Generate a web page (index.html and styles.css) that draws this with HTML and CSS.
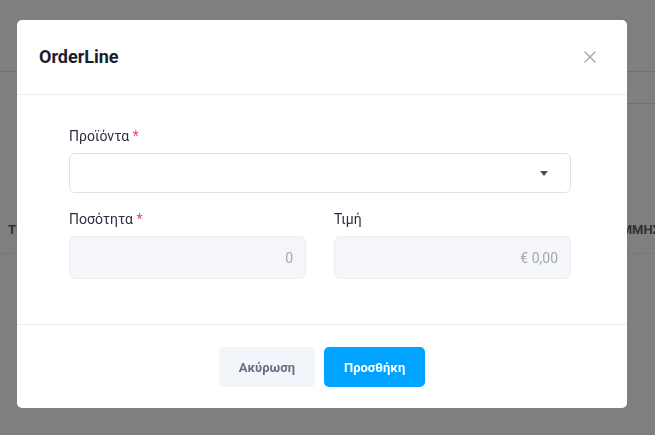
FILE: index.html
```html
<!DOCTYPE html>
<html lang="el">
<head>
<meta charset="utf-8">
<title>OrderLine</title>
<link rel="stylesheet" href="styles.css">
</head>
<body>
<div class="page">
  <div class="topbar"></div>
  <div class="subbar"></div>
  <div class="table-head">
    <span class="th-left">ΤΙΜΗ</span>
    <span class="th-right">ΓΡΑΜΜΗΣ</span>
  </div>
</div>
<div class="overlay"></div>
<div class="modal">
  <div class="modal-header">
    <h2 class="modal-title">OrderLine</h2>
    <button class="close-btn" aria-label="close">
      <svg width="12" height="12" viewBox="0 0 12 12"><path d="M1 1 L11 11 M11 1 L1 11" stroke="#a7aabd" stroke-width="1.5" fill="none" stroke-linecap="round"/></svg>
    </button>
  </div>
  <div class="modal-body">
    <div class="field">
      <label class="label">Προϊόντα <span class="req">*</span></label>
      <div class="select">
        <svg class="caret" width="8" height="5" viewBox="0 0 8 5"><path d="M0 0 H8 L4 5 Z" fill="#4f5160"/></svg>
      </div>
    </div>
    <div class="row">
      <div class="field">
        <label class="label">Ποσότητα <span class="req">*</span></label>
        <div class="input">0</div>
      </div>
      <div class="field">
        <label class="label">Τιμή</label>
        <div class="input">€ 0,00</div>
      </div>
    </div>
  </div>
  <div class="modal-footer">
    <button class="btn btn-cancel">Ακύρωση</button>
    <button class="btn btn-primary">Προσθήκη</button>
  </div>
</div>
</body>
</html>
```
FILE: styles.css
```css
html, body {
  margin: 0;
  padding: 0;
  width: 655px;
  height: 435px;
  overflow: hidden;
  font-family: Roboto, "Noto Sans", sans-serif;
  background: #ffffff;
}
.page {
  width: 655px;
  height: 435px;
}
.topbar {
  height: 72px;
  border-bottom: 1px solid #dedede;
  box-sizing: border-box;
}
.subbar {
  height: 32px;
  margin-left: 560px;
  border-bottom: 1px solid #dedede;
  box-sizing: border-box;
}
.table-head {
  margin-top: 102px;
  height: 48px;
  display: flex;
  justify-content: space-between;
  align-items: center;
  border-bottom: 1px dashed #e6e6e6;
  padding: 0 0 0 8px;
  font-size: 13px;
  font-weight: 700;
  color: #5e6070;
  white-space: nowrap;
  box-sizing: border-box;
}
.th-right {
  margin-right: -5px;
}
.overlay {
  position: fixed;
  inset: 0;
  background: rgba(0, 0, 0, 0.5);
}
.modal {
  position: fixed;
  left: 17px;
  top: 20px;
  width: 610px;
  background: #ffffff;
  border-radius: 5px;
  display: flex;
  flex-direction: column;
}
.modal-header {
  height: 75px;
  box-sizing: border-box;
  border-bottom: 1px solid #ebedf2;
  display: flex;
  align-items: center;
  justify-content: space-between;
  padding: 0 31px 1px 22px;
}
.modal-title {
  margin: 0;
  font-size: 18px;
  font-weight: 700;
  color: #1b1d31;
}
.close-btn {
  border: 0;
  background: none;
  padding: 0;
  width: 12px;
  height: 12px;
  display: flex;
}
.modal-body {
  padding: 31px 56px 45px 52px;
  display: flex;
  flex-direction: column;
  gap: 16px;
}
.row {
  display: flex;
  gap: 28px;
}
.row .field {
  flex: 1;
}
.field {
  display: flex;
  flex-direction: column;
  gap: 7px;
}
.label {
  font-size: 14px;
  line-height: 20px;
  color: #2d2f40;
}
.req {
  color: #f0416c;
}
.select {
  height: 40px;
  box-sizing: border-box;
  border: 1px solid #dfe0e8;
  border-radius: 6px;
  display: flex;
  align-items: center;
  justify-content: flex-end;
  padding-right: 22px;
}
.input {
  height: 43px;
  box-sizing: border-box;
  border: 1px solid #eceef2;
  background: #f5f6f9;
  border-radius: 6px;
  display: flex;
  align-items: center;
  justify-content: flex-end;
  padding-right: 12px;
  font-size: 14px;
  color: #a4a7b3;
}
.modal-footer {
  border-top: 1px solid #ebedf2;
  padding: 22px 0 21px;
  display: flex;
  justify-content: center;
  gap: 9px;
}
.btn {
  height: 40px;
  border: 0;
  border-radius: 5px;
  padding: 0 20px;
  font-family: Roboto, "Noto Sans", sans-serif;
  font-size: 13px;
  font-weight: 700;
}
.btn-cancel {
  background: #f2f5f9;
  color: #6c6e86;
}
.btn-primary {
  background: #00a3ff;
  color: #ffffff;
}
```
